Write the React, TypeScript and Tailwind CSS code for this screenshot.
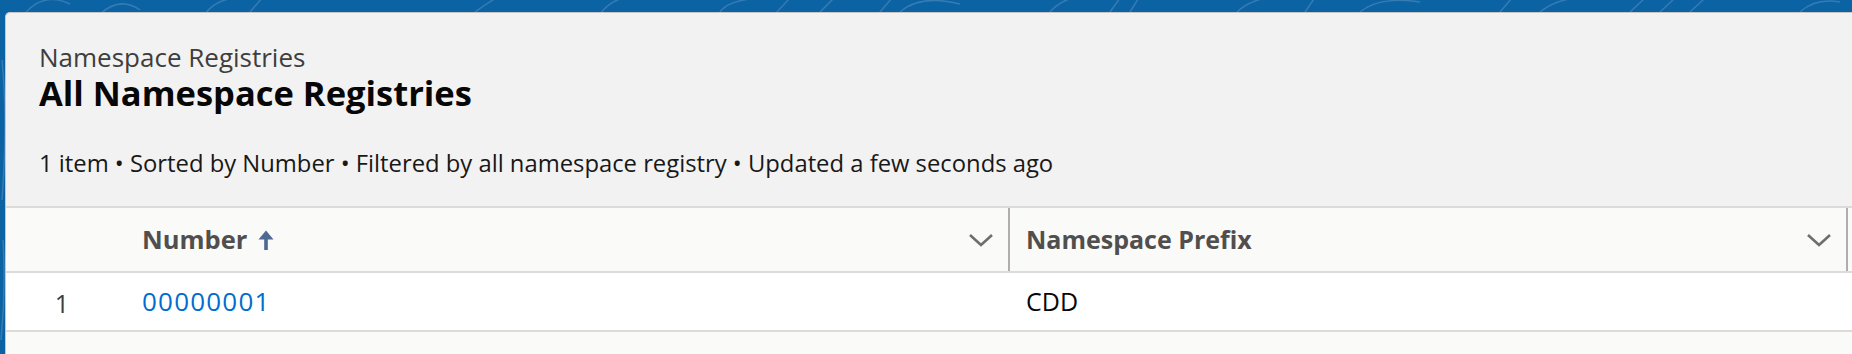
import React from 'react';

const font = { fontFamily: '"Open Sans", "Noto Sans", sans-serif' };

const Chevron: React.FC = () => (
  <svg width="26" height="14" viewBox="0 0 26 14" className="shrink-0">
    <path d="M2 2 L13 12 L24 2" fill="none" stroke="#706e6b" strokeWidth="2.6" />
  </svg>
);

const SortArrow: React.FC = () => (
  <svg width="16" height="20" viewBox="0 0 16 20" className="ml-[11px] shrink-0">
    <path d="M8 20 V5" stroke="#4f6a92" strokeWidth="3.6" />
    <path d="M0.5 9.5 L8 0.5 L15.5 9.5 Z" fill="#4f6a92" />
  </svg>
);

const BandPattern: React.FC = () => (
  <svg className="absolute inset-0 h-full w-full" preserveAspectRatio="none" viewBox="0 0 1852 354">
    <g fill="none" stroke="#5a8fc2" strokeWidth="1.5" opacity="0.55">
      <path d="M20 20 Q40 -10 70 4" />
      <path d="M100 14 Q120 -4 140 10" />
      <path d="M205 14 Q215 0 235 -2" />
      <path d="M250 12 L262 -2" />
      <path d="M470 16 Q488 2 500 -4" />
      <path d="M600 14 Q610 0 630 -4" />
      <path d="M720 12 Q728 0 760 -2" />
      <path d="M775 14 L790 -2" />
      <path d="M820 12 L836 -4" />
      <path d="M880 12 L892 -2" />
      <path d="M900 12 Q920 -6 960 4" />
      <path d="M1050 12 Q1060 0 1080 -4" />
      <path d="M1110 12 L1120 -2" />
      <path d="M1130 12 L1140 -4" />
      <path d="M1235 14 Q1250 -2 1280 -4" />
      <path d="M1305 12 L1316 -4" />
      <path d="M1360 12 Q1380 -4 1420 2" />
      <path d="M1500 12 L1512 -2" />
      <path d="M1540 12 Q1560 -4 1590 -2" />
      <path d="M1630 12 L1645 -2" />
      <path d="M1660 12 L1675 -2" />
      <path d="M1690 12 L1705 -2" />
      <path d="M1800 12 Q1815 -2 1840 2" />
      <path d="M2 60 Q8 120 2 200" />
      <path d="M3 240 Q6 290 1 340" />
    </g>
  </svg>
);

export default function App() {
  return (
    <div className="relative h-[354px] w-[1852px] overflow-hidden bg-[#0b63a3]" style={font}>
      <BandPattern />
      <div className="relative ml-[5px] mt-[12px] flex h-[342px] flex-col rounded-tl-[5px] border-l border-t border-[#c9c7c5] bg-[#f3f2f2]">
        {/* Header */}
        <div className="pl-[33px] pt-[29px]">
          <div className="text-[26px] leading-[30px] text-[#3e3e3c]">Namespace Registries</div>
          <div className="mt-[2px] text-[34.5px] font-bold leading-[38px] text-[#080707]">All Namespace Registries</div>
          <div className="pt-[36px] pb-[28px] text-[23.8px] leading-[30px] text-[#181818]">
            1 item • Sorted by Number • Filtered by all namespace registry • Updated a few seconds ago
          </div>
        </div>

        {/* Table */}
        <div className="flex-1 bg-[#fafaf9]">
          <div className="flex h-[67px] items-center border-t-2 border-b-2 border-[#dddbda] bg-[#fafaf9]">
            <div className="w-[112px] shrink-0" />
            <div className="flex h-full w-[890px] shrink-0 items-center pl-[24px] pr-[14px]">
              <span className="text-[25.5px] font-bold text-[#514f4d]">Number</span>
              <SortArrow />
              <div className="flex-1" />
              <Chevron />
            </div>
            <div className="h-full w-[2px] shrink-0 bg-[#b0adab]" />
            <div className="flex h-full w-[836px] shrink-0 items-center pl-[16px] pr-[14px]">
              <span className="text-[25px] font-bold text-[#514f4d]">Namespace Prefix</span>
              <div className="flex-1" />
              <Chevron />
            </div>
            <div className="h-full w-[2px] shrink-0 bg-[#b0adab]" />
          </div>
          <div className="flex h-[59px] items-center border-b-2 border-[#dddbda] bg-white">
            <div className="w-[112px] shrink-0 pt-[5px] text-center text-[25px] text-[#3e3e3c]">1</div>
            <div className="w-[890px] shrink-0 pl-[24px] text-[26px] tracking-[1.2px] text-[#006dcc]">00000001</div>
            <div className="w-[2px] shrink-0" />
            <div className="pl-[16px] text-[25px] text-[#080707]">CDD</div>
          </div>
        </div>
      </div>
    </div>
  );
}
